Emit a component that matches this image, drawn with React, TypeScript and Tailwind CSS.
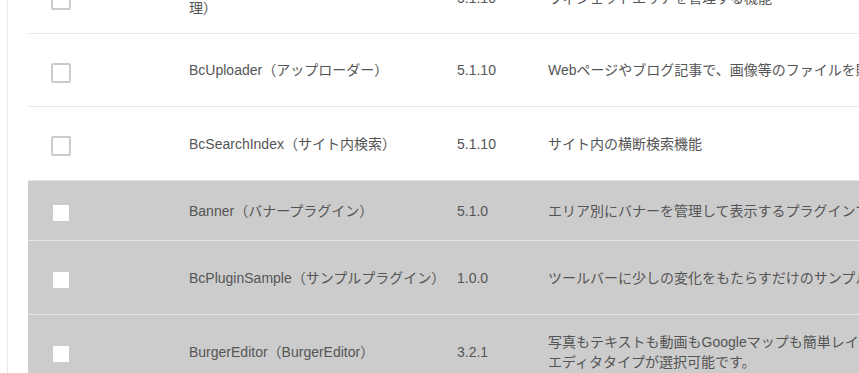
import React from "react";

type Row = {
  name: React.ReactNode;
  version: string;
  desc: React.ReactNode;
  h: string;
  gray?: boolean;
  extra?: string;
};

const rows: Row[] = [
  {
    name: (
      <>
        BcWidgetArea（ウィジェットエリア管
        <br />
        理）
      </>
    ),
    version: "5.1.10",
    desc: "ウィジェットエリアを管理する機能",
    h: "h-[72px]",
    extra: "-mt-[38px]",
  },
  {
    name: "BcUploader（アップローダー）",
    version: "5.1.10",
    desc: "Webページやブログ記事で、画像等のファイルを貼り付ける事ができます。",
    h: "h-[73px]",
  },
  {
    name: "BcSearchIndex（サイト内検索）",
    version: "5.1.10",
    desc: "サイト内の横断検索機能",
    h: "h-[74px]",
  },
  {
    name: "Banner（バナープラグイン）",
    version: "5.1.0",
    desc: "エリア別にバナーを管理して表示するプラグインです。",
    h: "h-[60px]",
    gray: true,
  },
  {
    name: "BcPluginSample（サンプルプラグイン）",
    version: "1.0.0",
    desc: "ツールバーに少しの変化をもたらすだけのサンプルプラグインです。",
    h: "h-[74px]",
    gray: true,
  },
  {
    name: "BurgerEditor（BurgerEditor）",
    version: "3.2.1",
    desc: (
      <>
        写真もテキストも動画もGoogleマップも簡単レイアウト。多彩なブロックと
        <br />
        エディタタイプが選択可能です。
      </>
    ),
    h: "h-[74px]",
    gray: true,
  },
];

export default function App() {
  return (
    <div
      className="w-[859px] h-[373px] overflow-hidden bg-white text-[14px] text-[#555555]"
      style={{ fontFamily: '"Liberation Sans", "Noto Sans CJK JP", sans-serif' }}
    >
      <div className="pl-[7px] h-full flex">
        <div className="border-l border-[#ebebeb] pl-[20px] h-full flex-1 overflow-hidden">
          <div className="w-[1100px] flex flex-col">
            {rows.map((r, i) => (
              <div
                key={i}
                className={`flex shrink-0 items-center border-b border-[#e6e6e6] box-border ${r.h} ${r.extra ?? ""} ${
                  r.gray ? "bg-[#cccccc]" : "bg-white"
                }`}
              >
                <div className="w-[161px] shrink-0 pl-[23px] flex items-center">
                  <div className="mt-[5px] w-5 h-5 rounded-[2px] border-2 border-[#cbcbcb] bg-white" />
                </div>
                <div className="w-[268px] shrink-0 whitespace-nowrap leading-[20px]">{r.name}</div>
                <div className="w-[91px] shrink-0 whitespace-nowrap leading-[20px]">{r.version}</div>
                <div className="flex-1 whitespace-nowrap leading-[20px]">{r.desc}</div>
              </div>
            ))}
          </div>
        </div>
      </div>
    </div>
  );
}
